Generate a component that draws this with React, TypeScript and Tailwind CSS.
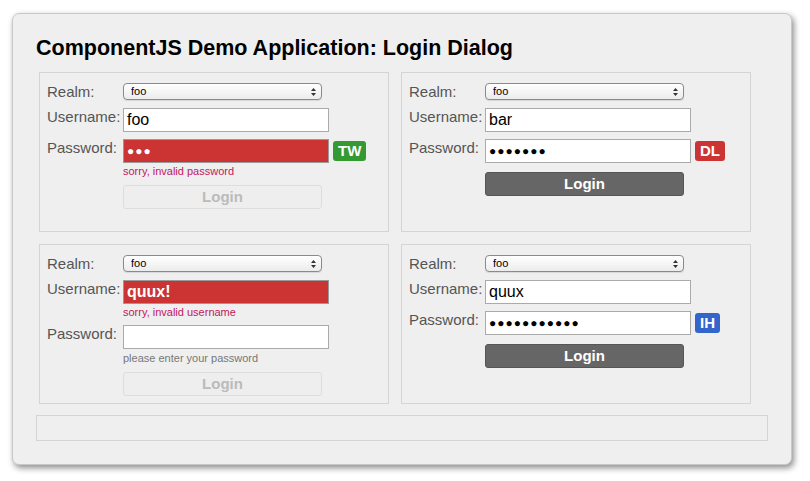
import React from "react";

const F = { fontFamily: '"Liberation Sans", Arial, sans-serif' };

function Select() {
  return (
    <div className="w-[199px] h-[17px] rounded-[4px] border border-[#8a8a8a] bg-gradient-to-b from-white to-[#ececec] flex items-center justify-between pl-[7px] pr-[5px] text-[11px] text-black shadow-[0_1px_1px_rgba(0,0,0,0.1)]">
      <span>foo</span>
      <svg width="5" height="8" viewBox="0 0 5 8"><path d="M0 3 L2.5 0 L5 3 Z M0 5 L2.5 8 L5 5 Z" fill="#333" /></svg>
    </div>
  );
}

function Input({ value, error, dots }: { value: string; error?: boolean; dots?: boolean }) {
  return (
    <div className={`w-[206px] h-[24px] border flex items-center px-[3px] ${error ? "bg-[#cc3333] border-[#999] text-white font-bold" : "bg-white border-[#aaa] text-black"} ${dots ? "text-[12px] tracking-[1px]" : "text-[16px]"}`}>
      {value}
    </div>
  );
}

function Row({ label, children, cls }: { label: string; children: React.ReactNode; cls?: string }) {
  return (
    <div className={`flex items-start ${cls ?? ""}`}>
      <div className="w-[76px] text-[15px] text-[#555] leading-[18px]">{label}</div>
      {children}
    </div>
  );
}

function Badge({ t, c }: { t: string; c: string }) {
  return <div className={`ml-[4px] mt-[2px] h-[20px] px-[5px] rounded-[3px] ${c} text-white font-bold text-[15px] flex items-center`}>{t}</div>;
}

function Btn({ on }: { on: boolean }) {
  return on ? (
    <div className="ml-[76px] w-[199px] h-[24px] rounded-[3px] bg-[#666] text-white font-bold text-[15px] flex items-center justify-center border border-[#555]">Login</div>
  ) : (
    <div className="ml-[76px] w-[199px] h-[24px] rounded-[3px] bg-[#eee] text-[#bbb] font-bold text-[15px] flex items-center justify-center border border-[#ddd]">Login</div>
  );
}

function Msg({ t, err }: { t: string; err?: boolean }) {
  return <div className={`ml-[76px] text-[11px] leading-[13px] ${err ? "text-[#c2185b]" : "text-[#777]"}`}>{t}</div>;
}

function Panel({ children }: { children: React.ReactNode }) {
  return <div className="w-[350px] h-[160px] border border-[#d4d4d4] pt-[10px] pl-[7px] flex flex-col">{children}</div>;
}

export default function App() {
  return (
    <div style={F} className="w-[810px] h-[481px] bg-white pt-[13px] pl-[12px]">
      <div className="w-[780px] h-[452px] rounded-[7px] bg-[#efefef] border border-[#c8c8c8] shadow-[2px_3px_6px_rgba(0,0,0,0.45)] pt-[22px] pl-[23px]">
        <div className="text-[21.5px] font-bold text-black leading-[24px]">ComponentJS Demo Application: Login Dialog</div>
        <div className="ml-[3px] mt-[12px] grid grid-cols-[350px_350px] gap-x-[12px] gap-y-[12px]">
          <Panel>
            <Row label="Realm:"><Select /></Row>
            <Row label="Username:" cls="mt-[7px]"><Input value="foo" /></Row>
            <Row label="Password:" cls="mt-[7px]"><Input value="●●●" error dots /><Badge t="TW" c="bg-[#339933]" /></Row>
            <div className="mt-[2px]"><Msg t="sorry, invalid password" err /></div>
            <div className="mt-[7px]"><Btn on={false} /></div>
          </Panel>
          <Panel>
            <Row label="Realm:"><Select /></Row>
            <Row label="Username:" cls="mt-[7px]"><Input value="bar" /></Row>
            <Row label="Password:" cls="mt-[7px]"><Input value="●●●●●●●" dots /><Badge t="DL" c="bg-[#cc3333]" /></Row>
            <div className="mt-[9px]"><Btn on /></div>
          </Panel>
          <Panel>
            <Row label="Realm:"><Select /></Row>
            <Row label="Username:" cls="mt-[7px]"><Input value="quux!" error /></Row>
            <div className="mt-[2px]"><Msg t="sorry, invalid username" err /></div>
            <Row label="Password:" cls="mt-[6px]"><Input value="" /></Row>
            <div className="mt-[3px]"><Msg t="please enter your password" /></div>
            <div className="mt-[7px]"><Btn on={false} /></div>
          </Panel>
          <Panel>
            <Row label="Realm:"><Select /></Row>
            <Row label="Username:" cls="mt-[7px]"><Input value="quux" /></Row>
            <Row label="Password:" cls="mt-[7px]"><Input value="●●●●●●●●●●●" dots /><Badge t="IH" c="bg-[#3366cc]" /></Row>
            <div className="mt-[9px]"><Btn on /></div>
          </Panel>
        </div>
        <div className="mt-[11px] w-[732px] h-[26px] border border-[#d4d4d4]" />
      </div>
    </div>
  );
}
